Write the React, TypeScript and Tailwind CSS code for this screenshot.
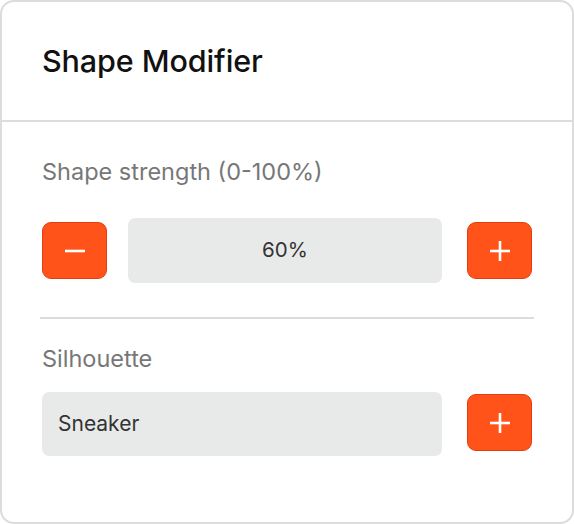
import React, { useState } from 'react';

const StepButton: React.FC<{ kind: 'minus' | 'plus'; onClick?: () => void }> = ({ kind, onClick }) => (
  <button
    onClick={onClick}
    className="flex h-[57px] w-[65px] shrink-0 items-center justify-center rounded-[9px] border border-[#e23f0c] bg-[#ff5319]"
  >
    <svg width="22" height="22" viewBox="0 0 22 22" fill="none">
      <line x1="1" y1="11" x2="21" y2="11" stroke="white" strokeWidth="2.6" />
      {kind === 'plus' && <line x1="11" y1="1" x2="11" y2="21" stroke="white" strokeWidth="2.6" />}
    </svg>
  </button>
);

const App: React.FC = () => {
  const [strength, setStrength] = useState(60);

  return (
    <div className="h-[524px] w-[574px] bg-white" style={{ fontFamily: 'Inter, "Noto Sans", sans-serif' }}>
      <div className="flex h-full flex-col rounded-[14px] border-2 border-[#dcdcdc]">
        <div className="flex h-[120px] items-center border-b-2 border-[#dcdcdc] px-[40px]">
          <h1 className="text-[30.5px] font-medium tracking-[-0.1px] text-[#111]">Shape Modifier</h1>
        </div>

        <div className="px-[38px] pt-[34px]">
          <div className="px-[2px]">
            <div className="mb-[30px] text-[23.5px] leading-[32px] text-[#777]">Shape strength (0-100%)</div>
            <div className="flex items-center">
              <StepButton kind="minus" onClick={() => setStrength(Math.max(0, strength - 10))} />
              <div className="ml-[21px] flex h-[65px] w-[315px] items-center justify-center rounded-[7px] bg-[#e8eaea] text-[20.5px] text-[#333]">
                {strength}%
              </div>
              <div className="ml-[25px]">
                <StepButton kind="plus" onClick={() => setStrength(Math.min(100, strength + 10))} />
              </div>
            </div>
          </div>

          <div className="mb-[24px] mt-[34px] h-[2px] w-[494px] bg-[#dcdcdc]" />

          <div className="px-[2px]">
            <div className="mb-[17px] text-[23.5px] leading-[32px] text-[#777]">Silhouette</div>
            <div className="flex items-start">
              <div className="flex h-[64px] w-[401px] items-center rounded-[7px] bg-[#e8eaea] px-[16px] text-[21px] text-[#333]">
                Sneaker
              </div>
              <div className="ml-[25px] mt-[2px]">
                <StepButton kind="plus" />
              </div>
            </div>
          </div>
        </div>
      </div>
    </div>
  );
};

export default App;
